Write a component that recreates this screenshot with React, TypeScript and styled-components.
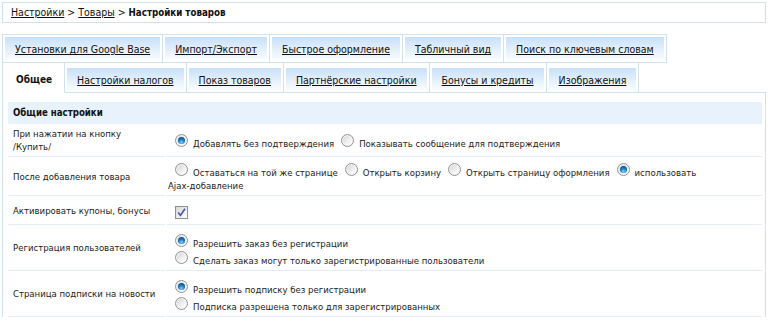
import React from "react";
import styled, { createGlobalStyle } from "styled-components";

const line = "#cfe2ee";
const rowLine = "#e4edf6";

const GlobalStyle = createGlobalStyle`
  body {
    margin: 0;
    background: #fff;
    font-family: "DejaVu Sans Condensed", "DejaVu Sans", Verdana, sans-serif;
    font-stretch: condensed;
    font-size: 9.5px;
    color: #222;
  }
`;

const Page = styled.div`
  width: 764px;
  padding: 2px 2px 0;
`;

const Breadcrumbs = styled.div`
  height: 19px;
  line-height: 19px;
  border: 1px solid ${line};
  padding-left: 8px;
  font-size: 10.5px;
  color: #111;
  white-space: nowrap;
`;

const Crumb = styled.a`
  color: #111;
  text-decoration: underline;
`;

const Current = styled.b`
  font-size: 9.7px;
  color: #111;
`;

const TabGroup = styled.div`
  margin-top: 11px;
  display: flex;
  flex-direction: column;
  font-size: 10.5px;
`;

const TopTabs = styled.div`
  align-self: flex-start;
  display: flex;
  border: 1px solid ${line};
`;

const TopTab = styled.div`
  padding: 2px 2px 0;
  & + & {
    border-left: 1px solid ${line};
  }
`;

const TabLink = styled.a<{ $h: number }>`
  display: block;
  height: ${(p) => p.$h}px;
  line-height: ${(p) => p.$h}px;
  padding: 0 10px;
  background: linear-gradient(#c8e0f8, #ffffff);
  color: #111;
  text-decoration: underline;
  white-space: nowrap;
`;

const SubTabs = styled.div`
  display: flex;
  border-left: 1px solid ${line};
`;

const SubTab = styled.div<{ $active?: boolean }>`
  padding: 5px 2px 0;
  border-right: 1px solid ${line};
  border-bottom: 1px solid ${(p) => (p.$active ? "transparent" : line)};
`;

const ActiveLabel = styled.span`
  display: block;
  height: 24px;
  line-height: 24px;
  padding: 0 10px 0 11px;
  font-size: 10px;
  font-weight: bold;
  color: #111;
`;

const Filler = styled.div`
  flex: 1;
  border-bottom: 1px solid ${line};
`;

const Panel = styled.div`
  border-left: 1px solid ${line};
  border-right: 1px solid ${line};
  padding: 9px 3px 0 5px;
`;

const SettingsGrid = styled.div`
  display: grid;
  grid-template-columns: 157px 1fr;
  grid-template-rows: 22px 33px 39px 29px 46px 46px;
  column-gap: 2px;
`;

const SectionHead = styled.div`
  grid-column: 1 / -1;
  background: #e8f2fc;
  padding-left: 5px;
  line-height: 22px;
  font-size: 9.6px;
  font-weight: bold;
  color: #111;
`;

const Label = styled.div`
  display: flex;
  align-items: center;
  padding: 0 5px;
  line-height: 13px;
  border-bottom: 1px solid ${rowLine};
  color: #222;
`;

const Value = styled.div`
  display: flex;
  flex-direction: column;
  justify-content: center;
  padding: 0 0 0 1px;
  line-height: 13px;
  border-bottom: 1px solid ${rowLine};
  color: #222;
`;

const Inline = styled.div``;

const NoWrap = styled.span`
  white-space: nowrap;
`;

const Option = styled.span<{ $block?: boolean }>`
  display: ${(p) => (p.$block ? "block" : "inline")};
  height: ${(p) => (p.$block ? "17px" : "auto")};
  white-space: ${(p) => (p.$block ? "nowrap" : "normal")};
`;

const Radio = styled.span<{ $on?: boolean }>`
  position: relative;
  display: inline-block;
  width: 13px;
  height: 13px;
  margin: 3px 5px 0 7px;
  box-sizing: border-box;
  border-radius: 50%;
  border: 1px solid #929394;
  background: linear-gradient(135deg, #d2d2d2, #f7f7f7 70%, #ffffff);
  box-shadow: inset 0 0 0 1px #f4f4f4;
  &::after {
    content: "";
    display: ${(p) => (p.$on ? "block" : "none")};
    position: absolute;
    left: 2px;
    top: 2px;
    width: 7px;
    height: 7px;
    border-radius: 50%;
    background: radial-gradient(circle at 50% 75%, #7fd3ff 0, #1a78c8 45%, #0d3a6e 100%);
  }
`;

const Checkbox = styled.span`
  display: inline-flex;
  align-items: center;
  justify-content: center;
  width: 13px;
  height: 13px;
  margin: 5px 0 1px 7px;
  box-sizing: border-box;
  border: 1px solid #8e8f90;
  background: linear-gradient(135deg, #d6d6d6, #ffffff);
`;

const topTabs = [
  "Установки для Google Base",
  "Импорт/Экспорт",
  "Быстрое оформление",
  "Табличный вид",
  "Поиск по ключевым словам",
];

const subTabs = [
  "Общее",
  "Настройки налогов",
  "Показ товаров",
  "Партнёрские настройки",
  "Бонусы и кредиты",
  "Изображения",
];

export default function App() {
  return (
    <>
      <GlobalStyle />
      <Page>
        <Breadcrumbs>
          <Crumb href="#">Настройки</Crumb> &gt; <Crumb href="#">Товары</Crumb>{" "}
          &gt; <Current>Настройки товаров</Current>
        </Breadcrumbs>

        <TabGroup>
          <TopTabs>
            {topTabs.map((t) => (
              <TopTab key={t}>
                <TabLink href="#" $h={25}>
                  {t}
                </TabLink>
              </TopTab>
            ))}
          </TopTabs>
          <SubTabs>
            {subTabs.map((t, i) => (
              <SubTab key={t} $active={i === 0}>
                {i === 0 ? (
                  <ActiveLabel>{t}</ActiveLabel>
                ) : (
                  <TabLink href="#" $h={24}>
                    {t}
                  </TabLink>
                )}
              </SubTab>
            ))}
            <Filler />
          </SubTabs>
        </TabGroup>

        <Panel>
          <SettingsGrid>
            <SectionHead>Общие настройки</SectionHead>

            <Label>
              <span>
                При нажатии на кнопку <NoWrap>/Купить/</NoWrap>
              </span>
            </Label>
            <Value>
              <Inline>
                <Option>
                  <Radio $on />
                  Добавлять без подтверждения
                </Option>
                <Option>
                  <Radio />
                  Показывать сообщение для подтверждения
                </Option>
              </Inline>
            </Value>

            <Label>После добавления товара</Label>
            <Value>
              <Inline>
                <Option>
                  <Radio />
                  Оставаться на той же странице
                </Option>
                <Option>
                  <Radio />
                  Открыть корзину
                </Option>
                <Option>
                  <Radio />
                  Открыть страницу оформления
                </Option>
                <Option>
                  <Radio $on />
                  <span>использовать </span>
                  <NoWrap>Ajax-добавление</NoWrap>
                </Option>
              </Inline>
            </Value>

            <Label>Активировать купоны, бонусы</Label>
            <Value>
              <Inline>
                <Checkbox>
                  <svg width="9" height="9" viewBox="0 0 9 9">
                    <path
                      d="M1.2 4.6 L3.4 7.4 L8 0.8"
                      fill="none"
                      stroke="#3f58aa"
                      strokeWidth="1.6"
                    />
                  </svg>
                </Checkbox>
              </Inline>
            </Value>

            <Label>Регистрация пользователей</Label>
            <Value>
              <Option $block>
                <Radio $on />
                Разрешить заказ без регистрации
              </Option>
              <Option $block>
                <Radio />
                Сделать заказ могут только зарегистрированные пользователи
              </Option>
            </Value>

            <Label>Страница подписки на новости</Label>
            <Value>
              <Option $block>
                <Radio $on />
                Разрешить подписку без регистрации
              </Option>
              <Option $block>
                <Radio />
                Подписка разрешена только для зарегистрированных
              </Option>
            </Value>
          </SettingsGrid>
        </Panel>
      </Page>
    </>
  );
}
